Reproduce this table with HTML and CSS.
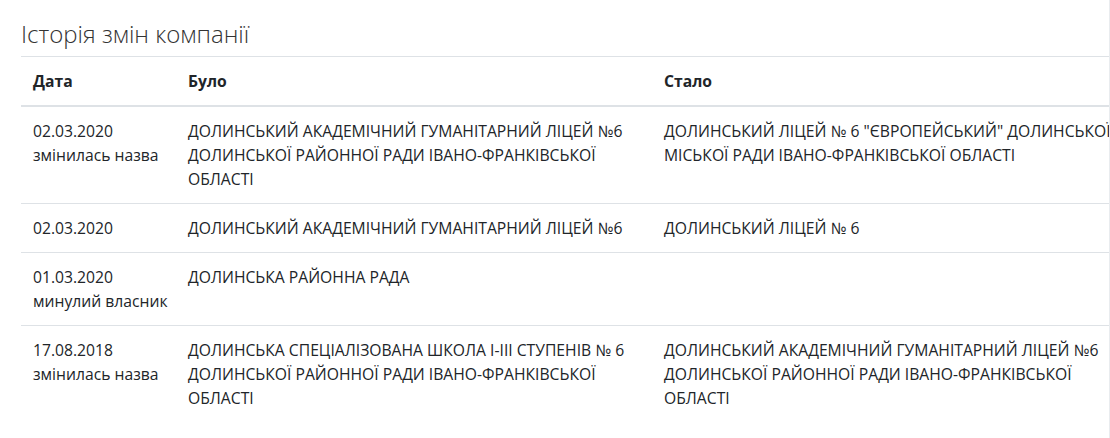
FILE: index.html
```html
<!DOCTYPE html>
<html lang="uk">
<head>
    <meta charset="UTF-8">
    <meta name="viewport" content="width=device-width, initial-scale=1.0">
    <title>Історія змін компанії</title>
    <link rel="stylesheet" href="styles.css">
</head>
<body>
    <div class="main">
        <h4 class="section-title">Історія змін компанії</h4>

        <table class="history-table">
            <colgroup>
                <col class="col-date">
                <col class="col-before">
                <col class="col-after">
            </colgroup>
            <thead>
                <tr>
                    <th>Дата</th>
                    <th>Було</th>
                    <th>Стало</th>
                </tr>
            </thead>
            <tbody>
                <tr>
                    <td class="date-cell">02.03.2020<br>змінилась назва</td>
                    <td>ДОЛИНСЬКИЙ АКАДЕМІЧНИЙ ГУМАНІТАРНИЙ ЛІЦЕЙ №6 ДОЛИНСЬКОЇ РАЙОННОЇ РАДИ ІВАНО-ФРАНКІВСЬКОЇ ОБЛАСТІ</td>
                    <td>ДОЛИНСЬКИЙ ЛІЦЕЙ № 6 "ЄВРОПЕЙСЬКИЙ" ДОЛИНСЬКОЇ МІСЬКОЇ РАДИ ІВАНО-ФРАНКІВСЬКОЇ ОБЛАСТІ</td>
                </tr>
                <tr>
                    <td class="date-cell">02.03.2020</td>
                    <td>ДОЛИНСЬКИЙ АКАДЕМІЧНИЙ ГУМАНІТАРНИЙ ЛІЦЕЙ №6</td>
                    <td>ДОЛИНСЬКИЙ ЛІЦЕЙ № 6</td>
                </tr>
                <tr>
                    <td class="date-cell">01.03.2020<br>минулий власник</td>
                    <td>ДОЛИНСЬКА РАЙОННА РАДА</td>
                    <td></td>
                </tr>
                <tr>
                    <td class="date-cell">17.08.2018<br>змінилась назва</td>
                    <td>ДОЛИНСЬКА СПЕЦІАЛІЗОВАНА ШКОЛА І-ІІІ СТУПЕНІВ № 6 ДОЛИНСЬКОЇ РАЙОННОЇ РАДИ ІВАНО-ФРАНКІВСЬКОЇ ОБЛАСТІ</td>
                    <td>ДОЛИНСЬКИЙ АКАДЕМІЧНИЙ ГУМАНІТАРНИЙ ЛІЦЕЙ №6 ДОЛИНСЬКОЇ РАЙОННОЇ РАДИ ІВАНО-ФРАНКІВСЬКОЇ ОБЛАСТІ</td>
                </tr>
            </tbody>
        </table>
    </div>
</body>
</html>
```

FILE: styles.css
```css
* {
    margin: 0;
    padding: 0;
    box-sizing: border-box;
}

body {
    font-family: 'Open Sans', 'Noto Sans', sans-serif;
    font-size: 15.7px;
    line-height: 24px;
    color: #212529;
    background-color: #ffffff;
}

.main {
    width: 1110px;
    height: 100vh;
    padding: 20px 0 0 21px;
    border-right: 1px solid #e9ecef;
    overflow: hidden;
}

.section-title {
    font-size: 24px;
    font-weight: 300;
    line-height: 28.8px;
    color: #333333;
    margin-bottom: 7px;
}

.history-table {
    width: 1112px;
    table-layout: fixed;
    border-collapse: collapse;
}

.col-date {
    width: 155px;
}

.col-before {
    width: 476px;
}

.col-after {
    width: 481px;
}

.history-table th,
.history-table td {
    padding: 12px;
    text-align: left;
    vertical-align: top;
    border-top: 1px solid #dee2e6;
}

.history-table th {
    font-weight: 700;
    border-bottom: 2px solid #dee2e6;
}

.history-table .date-cell {
    white-space: nowrap;
}
```
